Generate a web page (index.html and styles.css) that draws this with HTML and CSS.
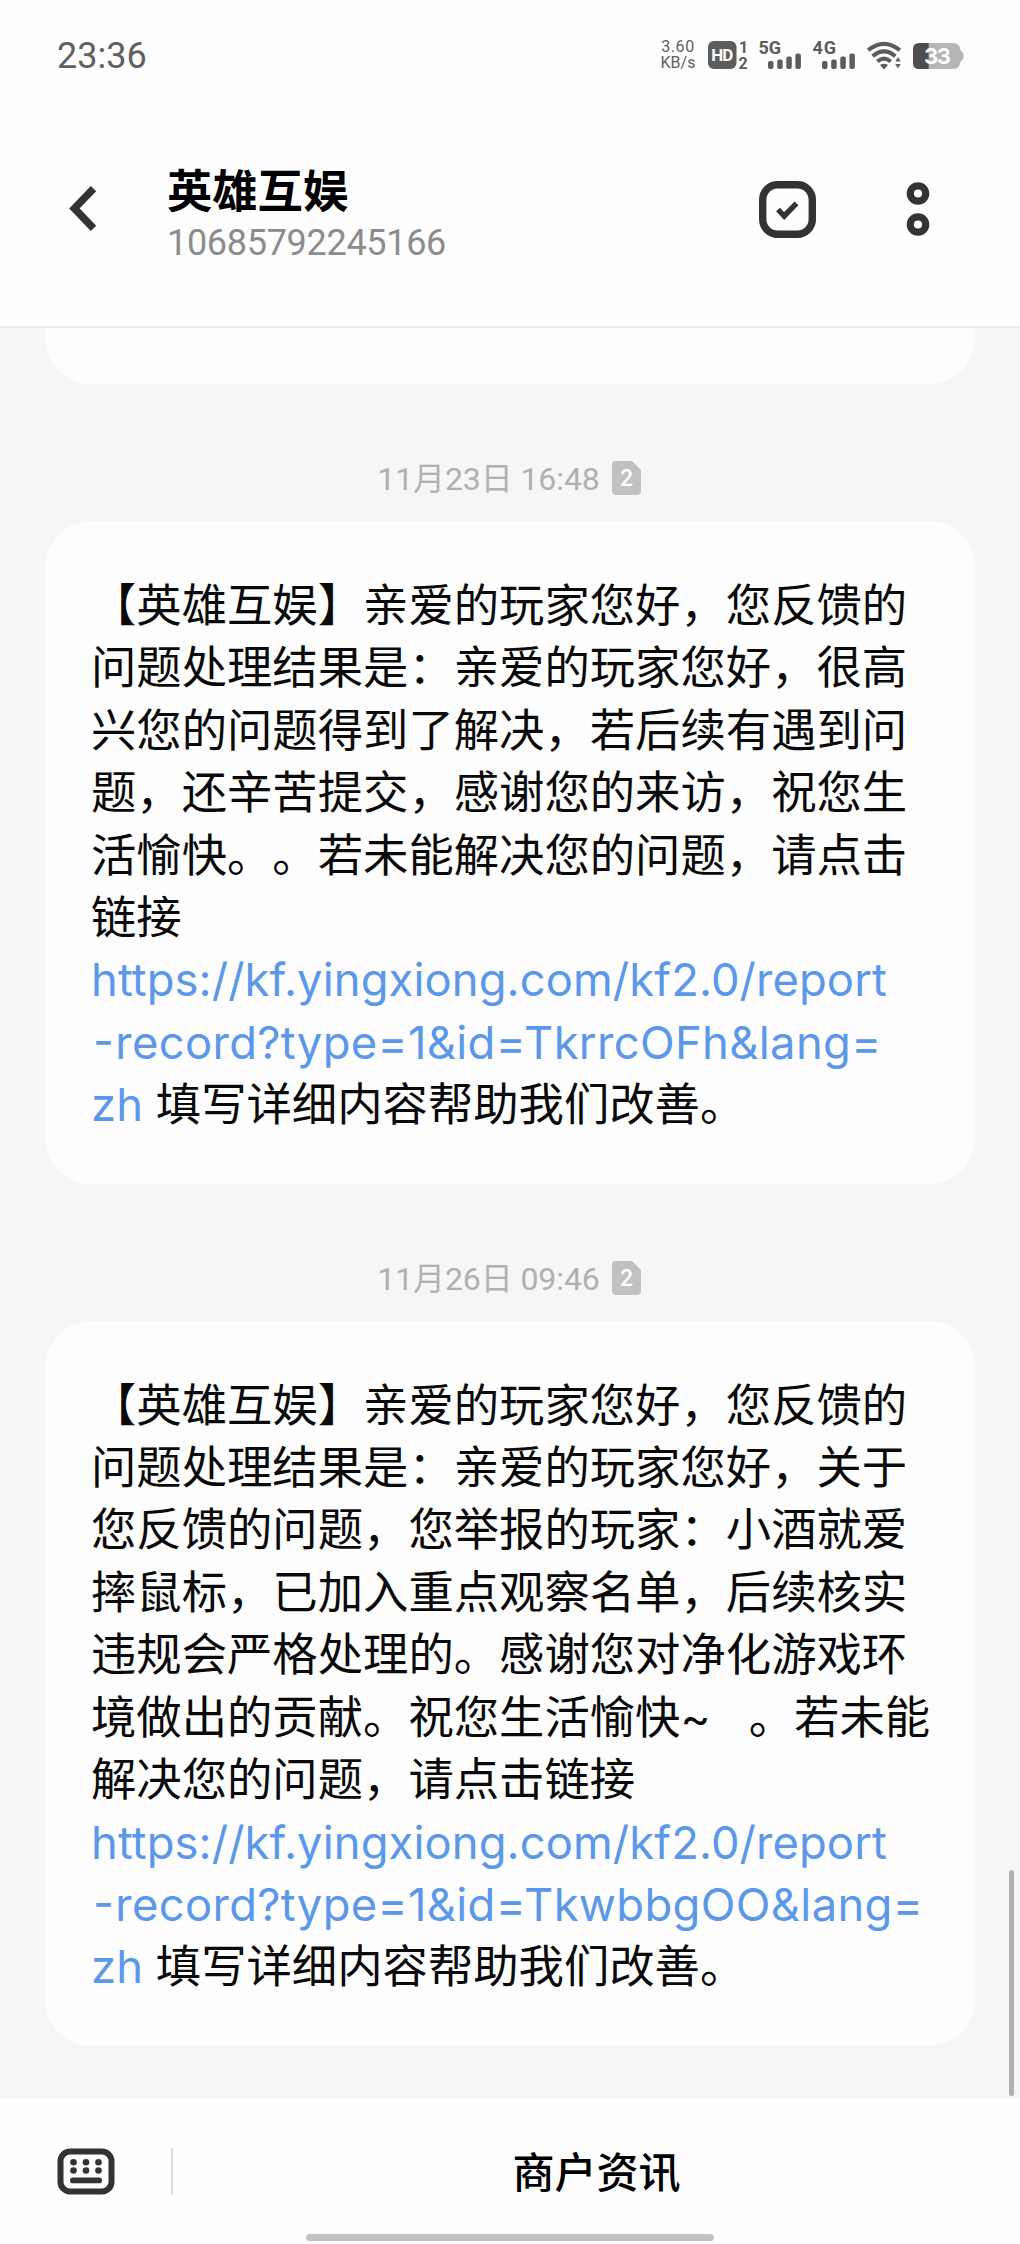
FILE: index.html
```html
<!DOCTYPE html>
<html lang="zh-CN">
<head>
    <meta charset="UTF-8">
    <title>英雄互娱</title>
    <link rel="stylesheet" href="styles.css">
</head>
<body>
<div class="phone">
    <div class="status-bar">
        <div class="clock">23:36</div>
        <div class="speed"><span>3.60</span><span>KB/s</span></div>
        <svg class="status-icons" width="262" height="48" viewBox="706 31 262 48">
            <!-- HD 1/2 -->
            <rect x="708" y="41" width="28.5" height="28" rx="6" fill="#5c5c5c"/>
            <text x="722.3" y="61.3" class="hd" textLength="22">HD</text>
            <text x="743.5" y="52.5" class="num">1</text>
            <text x="743.2" y="68.8" class="num">2</text>
            <!-- signal -->
            <text x="758.5" y="54" class="net" textLength="22.5">5G</text>
            <g fill="#5c5c5c">
                <rect x="768" y="61" width="5.5" height="8" rx="2"/>
                <rect x="777.2" y="59.5" width="5.5" height="9.5" rx="2"/>
                <rect x="786.3" y="56.5" width="5.5" height="12.5" rx="2"/>
                <rect x="795.4" y="53.5" width="5.5" height="15.5" rx="2"/>
            </g>
            <text x="812.5" y="54" class="net" textLength="23.5">4G</text>
            <g fill="#5c5c5c">
                <rect x="822" y="61" width="5.5" height="8" rx="2"/>
                <rect x="831.2" y="59.5" width="5.5" height="9.5" rx="2"/>
                <rect x="840.3" y="56.5" width="5.5" height="12.5" rx="2"/>
                <rect x="849.4" y="53.5" width="5.5" height="15.5" rx="2"/>
            </g>
            <!-- wifi -->
            <g fill="none" stroke="#5c5c5c" stroke-width="4">
                <path d="M868.2 50.3Q884 37.5 899.8 50.3"/>
                <path d="M872.7 56.2Q884 46.5 895.3 56.2"/>
                <path d="M877.3 61.6Q884 55.6 890.7 61.6"/>
            </g>
            <path d="M880 65Q884 62.3 888 65L884 69.5Z" fill="#5c5c5c"/>
            <path d="M895.3 61.5L898 57L900.7 61.5ZM895.3 64L898 68.5L900.7 64Z" fill="#5c5c5c"/>
            <!-- battery -->
            <path d="M928 43H953Q960 43 960 49.5L963.5 53.5V58.5L960 62.5Q960 69 953 69H928Z" fill="#b5b5b5"/>
            <path d="M928.7 43H919Q913 43 913 49V63Q913 69 919 69H928.7Z" fill="#4e4e4e"/>
            <text x="937.5" y="64.2" class="level" textLength="27">33</text>
        </svg>
    </div>

    <div class="header">
        <svg class="back" width="28" height="48" viewBox="68 184 28 48">
            <path d="M93.5 188.6L74.4 208.4L93.5 228.4" fill="none" stroke="#333" stroke-width="7.5"/>
        </svg>
        <div class="contact">
            <div class="name">英雄互娱</div>
            <div class="number">10685792245166</div>
        </div>
        <svg class="select" width="57" height="57" viewBox="0 0 57 57" fill="none" stroke="#333">
            <rect x="3.7" y="3.7" width="49.6" height="49.6" rx="15" stroke-width="7.4"/>
            <path d="M19 28.5L25.2 35L37.5 22.3" stroke-width="5.4"/>
        </svg>
        <svg class="more" width="24" height="56" viewBox="0 0 24 56" fill="none" stroke="#333" stroke-width="7.2">
            <circle cx="12" cy="12.5" r="7.7"/>
            <circle cx="12" cy="43.5" r="7.7"/>
        </svg>
    </div>

    <div class="messages">
        <div class="bubble previous"></div>

        <div class="date">
            <span class="date-text">11月23日 16:48</span>
            <svg width="29" height="34" viewBox="0 0 29 34">
                <path d="M4 0H20L29 9V30Q29 34 25 34H4Q0 34 0 30V4Q0 0 4 0Z" fill="#c1c1c1"/>
                <text x="14.5" y="25" class="sim">2</text>
            </svg>
        </div>
        <div class="bubble">
            【英雄互娱】亲爱的玩家您好，您反馈的<br>
            问题处理结果是：亲爱的玩家您好，很高<br>
            兴您的问题得到了解决，若后续有遇到问<br>
            题，还辛苦提交，感谢您的来访，祝您生<br>
            活愉快。。若未能解决您的问题，请点击<br>
            链接<br>
            <a class="link">https://kf.yingxiong.com/kf2.0/report<br><span class="wide"><span class="dash">-</span>record?type=1&amp;id=TkrrcOFh&amp;lang=</span><br>zh</a> 填写详细内容帮助我们改善。
        </div>

        <div class="date">
            <span class="date-text">11月26日 09:46</span>
            <svg width="29" height="34" viewBox="0 0 29 34">
                <path d="M4 0H20L29 9V30Q29 34 25 34H4Q0 34 0 30V4Q0 0 4 0Z" fill="#c1c1c1"/>
                <text x="14.5" y="25" class="sim">2</text>
            </svg>
        </div>
        <div class="bubble">
            【英雄互娱】亲爱的玩家您好，您反馈的<br>
            问题处理结果是：亲爱的玩家您好，关于<br>
            您反馈的问题，您举报的玩家：小酒就爱<br>
            摔鼠标，已加入重点观察名单，后续核实<br>
            违规会严格处理的。感谢您对净化游戏环<br>
            境做出的贡献。祝您生活愉快~&nbsp;&nbsp;&nbsp;。若未能<br>
            解决您的问题，请点击链接<br>
            <a class="link">https://kf.yingxiong.com/kf2.0/report<br><span class="wide"><span class="dash">-</span>record?type=1&amp;id=TkwbbgOO&amp;lang=</span><br>zh</a> 填写详细内容帮助我们改善。
        </div>
        <div class="scrollbar"></div>
    </div>

    <div class="footer">
        <svg class="keyboard" width="58" height="47" viewBox="0 0 58 47">
            <rect x="3.5" y="3.5" width="51" height="40" rx="9.5" fill="none" stroke="#333" stroke-width="6"/>
            <g fill="#333">
                <circle cx="16.5" cy="14.3" r="3.3"/>
                <circle cx="29" cy="14.3" r="3.3"/>
                <circle cx="41.5" cy="14.3" r="3.3"/>
                <circle cx="16.5" cy="22.5" r="3.3"/>
                <circle cx="29" cy="22.5" r="3.3"/>
                <circle cx="41.5" cy="22.5" r="3.3"/>
                <rect x="13" y="29.5" width="32" height="5.8" rx="2.9"/>
            </g>
        </svg>
        <div class="divider"></div>
        <div class="menu">商户资讯</div>
        <div class="home-bar"></div>
    </div>
</div>
</body>
</html>
```

FILE: styles.css
```css
body {
    margin: 0;
    background-color: #fdfdfd;
    font-family: Inter, "Noto Sans CJK SC", sans-serif;
}
.phone { width: 1020px; height: 2244px; display: flex; flex-direction: column; overflow: hidden; }

.status-bar { height: 110px; display: flex; align-items: center; box-sizing: border-box; padding: 0 52px 0 57px; flex: none; }
.clock { font-family: Roboto, sans-serif; font-size: 36px; line-height: 40px; color: #606060; flex: 1; padding-top: 2px; }
.speed { width: 36px; margin-right: 10px; display: flex; flex-direction: column; align-items: center; font-family: Roboto, sans-serif; font-size: 16px; line-height: 16px; color: #606060; }
.speed span:first-child { letter-spacing: 0.6px; }
.status-icons { display: block; }
.status-icons text { font-family: Roboto, sans-serif; font-weight: 700; fill: #5c5c5c; }
.status-icons .hd { font-size: 17px; fill: #fdfdfd; text-anchor: middle; }
.status-icons .num { font-size: 16px; text-anchor: middle; }
.status-icons .net { font-size: 18px; }
.status-icons .level { font-family: Inter, sans-serif; font-size: 22px; fill: #ffffff; text-anchor: middle; }

.header { height: 216px; box-sizing: border-box; padding: 55px 90px 0 68px; display: flex; align-items: flex-start; flex: none; }
.back { margin-top: 19px; }
.contact { flex: 1; margin: 1px 0 0 71px; }
.name { font-size: 45.3px; line-height: 52px; font-weight: 700; color: #000000; }
.number { font-family: Roboto, sans-serif; font-size: 36px; line-height: 42px; letter-spacing: -0.3px; color: #8c8c8c; margin-top: 4px; }
.select { margin-top: 16px; }
.more { margin: 16px 0 0 90px; }

.messages { position: relative; height: 1772px; box-sizing: border-box; border-top: 2px solid #ececec; background-color: #f6f6f6; padding: 0 45px; flex: none; }
.bubble {
    box-sizing: border-box;
    padding: 54px 40px 47px 46px;
    border-radius: 46px;
    background-color: #fdfdfd;
    color: #0a0a0a;
    font-size: 45.35px;
    line-height: 62.4px;
    white-space: nowrap;
    text-spacing-trim: space-all;
}
.previous { height: 56px; padding: 0; border-radius: 0 0 46px 46px; }
.date { height: 137px; display: flex; justify-content: center; align-items: flex-end; gap: 12px; box-sizing: border-box; padding: 0 2px 26px 0; }
.date-text { font-family: Roboto, "Noto Sans CJK SC", sans-serif; font-size: 32px; line-height: 32px; letter-spacing: -0.1px; color: #b0b0b0; }
.sim { font-family: Roboto, sans-serif; font-size: 23px; font-weight: 500; fill: #ffffff; text-anchor: middle; }
.link { color: #5b98ea; letter-spacing: 0.1px; }
.wide { letter-spacing: 0.35px; }
.dash { margin: 0 1px 0 2px; font-feature-settings: "case"; }
.scrollbar { position: absolute; right: 6px; bottom: 2px; width: 5px; height: 226px; border-radius: 3px; background-color: #b0b0b0; }

.footer { position: relative; flex: 1; display: flex; align-items: flex-start; padding: 50px 0 0 57px; }
.divider { width: 2px; height: 46px; margin-left: 56px; background-color: #dddddd; }
.menu { flex: 1; text-align: center; font-size: 42px; line-height: 46px; font-weight: 500; color: #000000; padding-top: 2px; }
.home-bar { position: absolute; left: 306px; bottom: 3px; width: 408px; height: 7px; border-radius: 4px; background-color: #c2c2c2; }
```
